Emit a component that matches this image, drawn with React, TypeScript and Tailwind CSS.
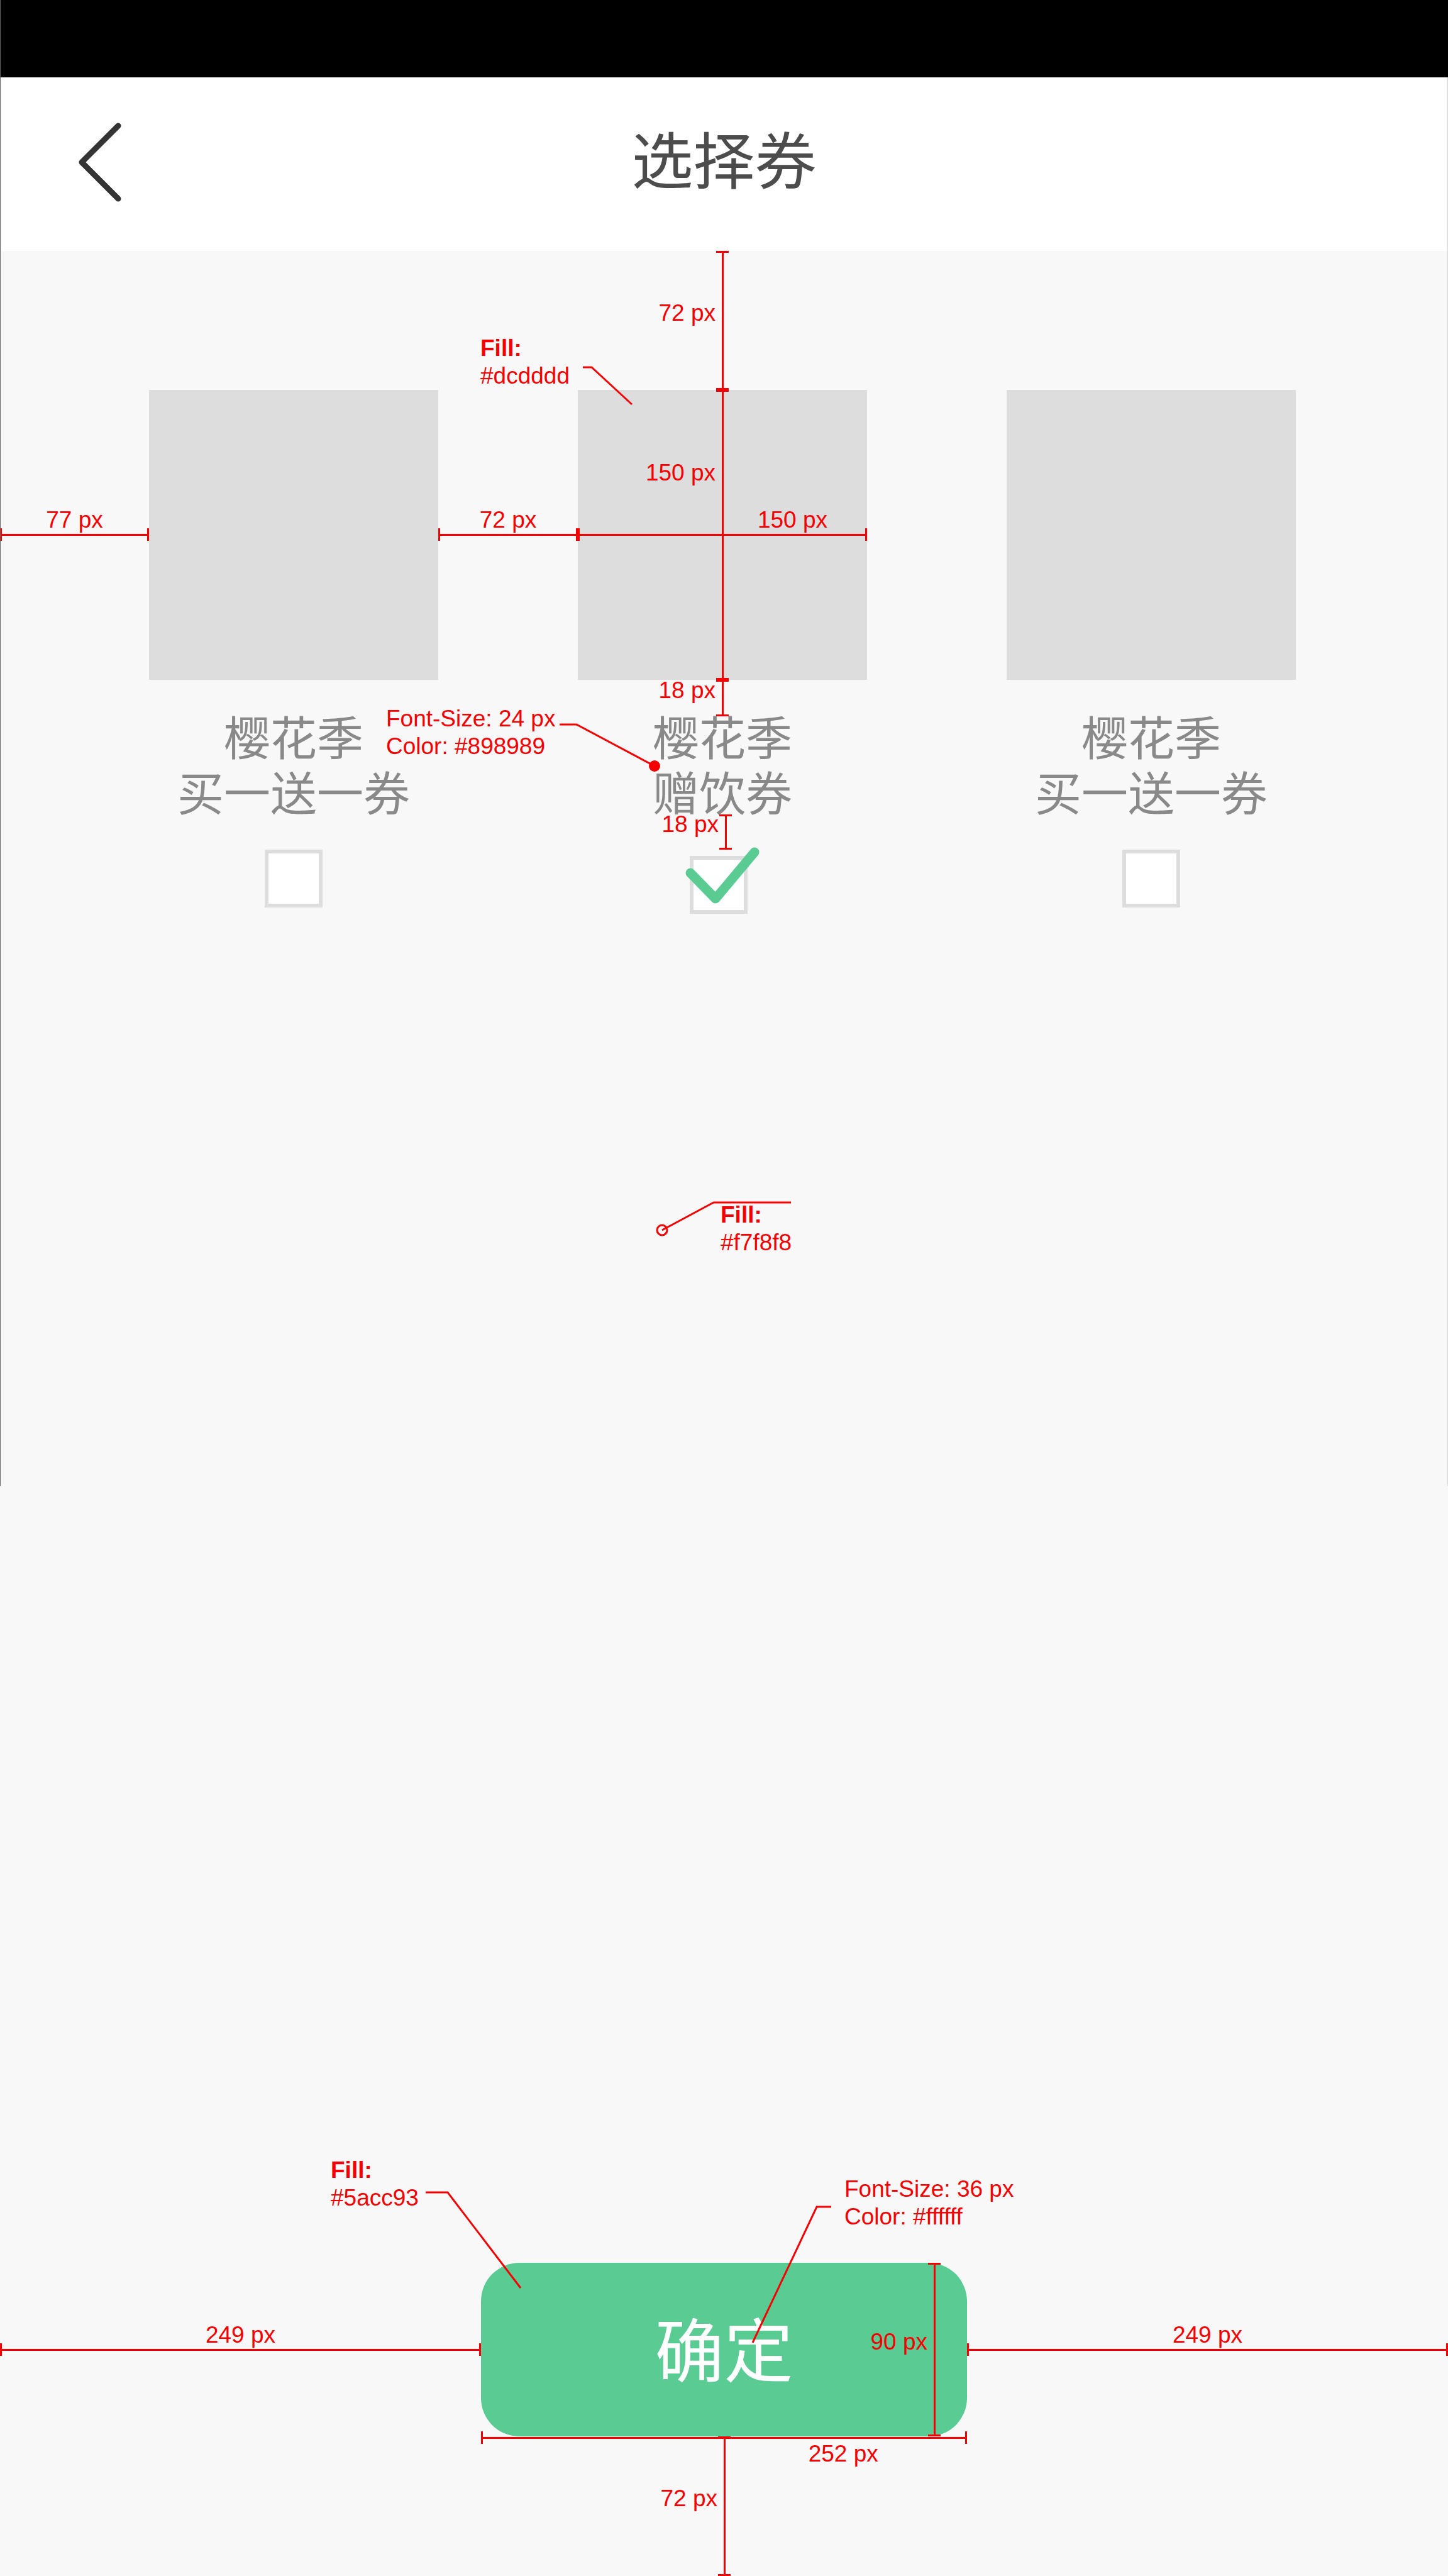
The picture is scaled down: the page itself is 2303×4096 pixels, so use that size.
import { useState, type ReactNode } from 'react'

const RED = '#f40000'

type RulerProps = { label: string; className: string; labelClassName?: string }

function HorizontalRuler({ label, className, labelClassName = 'inset-x-0 bottom-[11px]' }: RulerProps) {
  return (
    <div className={`flex h-5 items-center border-x-[3px] border-[#f40000] ${className}`}>
      <div className="h-[3px] w-full bg-[#f40000]" />
      <span className={`absolute whitespace-nowrap text-center ${labelClassName}`}>{label}</span>
    </div>
  )
}

function VerticalRuler({ label, className, labelClassName = 'inset-y-0 pb-[24px]' }: RulerProps) {
  return (
    <div className={`absolute flex w-5 justify-center border-y-[3px] border-[#f40000] ${className}`}>
      <div className="h-full w-[3px] bg-[#f40000]" />
      <div className={`absolute right-full mr-px flex items-center whitespace-nowrap ${labelClassName}`}>
        <span>{label}</span>
      </div>
    </div>
  )
}

function Note({ className, bold, lines }: { className: string; bold?: boolean; lines: [string, string] }) {
  return (
    <p className={`absolute whitespace-nowrap ${className}`}>
      <span className={bold ? 'block font-bold' : 'block'}>{lines[0]}</span>
      <span className="block">{lines[1]}</span>
    </p>
  )
}

function Leader({ points, children }: { points: string; children?: ReactNode }) {
  return (
    <svg className="absolute left-0 top-0 size-full overflow-visible" aria-hidden="true">
      <polyline points={points} fill="none" stroke={RED} strokeWidth="3" />
      {children}
    </svg>
  )
}

type CouponProps = {
  lines: [string, string]
  checked: boolean
  onToggle: () => void
  swatchNotes?: ReactNode
  children?: ReactNode
}

function Coupon({ lines, checked, onToggle, swatchNotes, children }: CouponProps) {
  return (
    <div className="relative w-[460px]">
      <label className="flex flex-col items-center">
        <span className="block h-[461px] w-full bg-[#dddddd]" />
        <span className="mt-[44px] block whitespace-nowrap text-center font-['Noto_Sans_CJK_SC',sans-serif] text-[74px] leading-[88px] text-[#898989]">
          <span className="block">{lines[0]}</span>
          <span className="block">{lines[1]}</span>
        </span>
        <span
          className={`relative mt-[46px] flex h-[106px] w-[118px] ${
            checked ? 'items-end justify-start pl-[7px]' : 'items-start justify-center pt-1'
          }`}
        >
          <input
            type="checkbox"
            checked={checked}
            onChange={onToggle}
            className="size-[92px] appearance-none border-[6px] border-[#dddddd] bg-white"
          />
          {checked && (
            <svg className="absolute left-0 top-0 h-[106px] w-[118px]" viewBox="0 0 118 106" aria-hidden="true">
              <path
                d="M8 41 L48 82 L110 8"
                fill="none"
                stroke="#5acc93"
                strokeWidth="15"
                strokeLinecap="round"
                strokeLinejoin="round"
              />
            </svg>
          )}
        </span>
      </label>
      <div className="absolute inset-x-0 top-0 h-[461px]">{swatchNotes}</div>
      {children}
    </div>
  )
}

export default function App() {
  const [selected, setSelected] = useState([false, true, false])
  const toggle = (index: number) =>
    setSelected((current) => current.map((value, i) => (i === index ? !value : value)))

  return (
    <div className="relative flex min-h-screen flex-col bg-[#f8f8f8] font-['Liberation_Sans',Arial,sans-serif] text-[37px] leading-[44px] text-[#f40000]">
      <div className="h-[123px] bg-black" />

      <header className="relative flex h-[276px] items-center justify-center bg-white">
        <button type="button" aria-label="返回" className="absolute left-[120px] top-[66px] h-[138px] w-[78px]">
          <svg viewBox="0 0 78 138" className="size-full" aria-hidden="true">
            <path
              d="M68 11 L10 69 L68 127"
              fill="none"
              stroke="#333333"
              strokeWidth="9"
              strokeLinecap="round"
              strokeLinejoin="round"
            />
          </svg>
        </button>
        <h1 className="pb-[24px] font-['Noto_Sans_CJK_SC',sans-serif] text-[98px] leading-[120px] text-[#4c4c4c]">
          选择券
        </h1>
      </header>

      <section className="flex justify-between pl-[237px] pr-[242px] pt-[221px]">
        <Coupon
          lines={['樱花季', '买一送一券']}
          checked={selected[0]}
          onToggle={() => toggle(0)}
          swatchNotes={
            <>
              <HorizontalRuler label="77 px" className="absolute right-full top-[220px] w-[237px]" />
              <HorizontalRuler label="72 px" className="absolute left-full top-[220px] w-[222px]" />
            </>
          }
        />
        <Coupon
          lines={['樱花季', '赠饮券']}
          checked={selected[1]}
          onToggle={() => toggle(1)}
          swatchNotes={
            <>
              <VerticalRuler label="72 px" className="bottom-full left-[220px] h-[221px]" />
              <VerticalRuler
                label="150 px"
                className="left-[220px] top-0 h-full"
                labelClassName="top-0 h-1/2 pt-[30px]"
              />
              <VerticalRuler label="18 px" className="left-[220px] top-full h-[58px]" />
              <HorizontalRuler
                label="150 px"
                className="absolute inset-x-0 top-[220px]"
                labelClassName="bottom-[11px] left-1/2 right-1"
              />
              <Note className="left-[-155px] top-[-88px]" bold lines={['Fill:', '#dcdddd']} />
              <Leader points="8,-36 22,-36 86,23" />
              <Note className="left-[-305px] top-[501px]" lines={['Font-Size: 24 px', 'Color: #898989']} />
              <Leader points="-29,532 -2,532 122,598">
                <circle cx="122" cy="598" r="9" fill={RED} />
              </Leader>
            </>
          }
        >
          <VerticalRuler label="18 px" className="left-[225px] top-[675px] h-[56px]" />
        </Coupon>
        <Coupon lines={['樱花季', '买一送一券']} checked={selected[2]} onToggle={() => toggle(2)} />
      </section>

      <section className="relative flex-1">
        <div className="absolute left-[1044px] top-[455px] h-[88px] w-[214px]">
          <Leader points="9,48 91,4 214,4">
            <circle cx="9" cy="48" r="8" fill="none" stroke={RED} strokeWidth="3" />
          </Leader>
          <Note className="left-[102px] top-[2px]" bold lines={['Fill:', '#f7f8f8']} />
        </div>
      </section>

      <footer className="flex items-center pb-[222px]">
        <HorizontalRuler label="249 px" className="relative flex-1" />
        <div className="relative h-[276px] w-[773px]">
          <button
            type="button"
            className="size-full rounded-[61px] bg-[#5acc93] pb-[10px] font-['Noto_Sans_CJK_SC',sans-serif] text-[110px] leading-[132px] text-white"
          >
            确定
          </button>
          <VerticalRuler label="90 px" className="inset-y-0 right-[42px]" />
          <HorizontalRuler
            label="252 px"
            className="absolute inset-x-0 top-full -mt-2"
            labelClassName="top-[14px] left-1/2 right-1"
          />
          <VerticalRuler label="72 px" className="left-[377px] top-full h-[222px]" />
          <Note className="left-[-239px] top-[-169px]" bold lines={['Fill:', '#5acc93']} />
          <Leader points="-88,-112 -53,-112 63,40" />
          <Note className="left-[578px] top-[-139px]" lines={['Font-Size: 36 px', 'Color: #ffffff']} />
          <Leader points="557,-89 534,-89 432,127" />
        </div>
        <HorizontalRuler label="249 px" className="relative flex-1" />
      </footer>

      <div className="absolute left-0 top-0 h-[2363px] w-px bg-[#666666]" />
      <div className="absolute right-0 top-[123px] h-[2240px] w-px bg-[#d4d4d4]" />
    </div>
  )
}
